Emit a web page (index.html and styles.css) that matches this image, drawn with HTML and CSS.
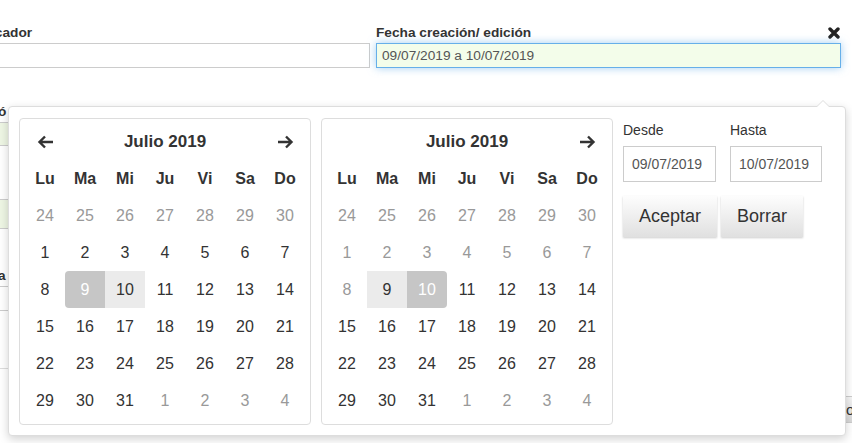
FILE: index.html
```html
<!DOCTYPE html>
<html lang="es">
<head>
  <meta charset="UTF-8">
  <title>Búsqueda</title>
  <meta name="viewport" content="width=device-width, initial-scale=1.0">
  <link rel="stylesheet" href="styles.css">
</head>
<body>

<div class="form">
  <div class="row">
    <div class="field">
      <div class="lbl-row"><label>Identificador</label></div>
      <input class="txt" type="text">
    </div>
    <div class="field">
      <div class="lbl-row">
        <label>Fecha creación/ edición</label>
        <svg class="close" width="12" height="12" viewBox="0 0 12 12"><path d="M2 2 10 10M10 2 2 10" stroke="#222" stroke-width="3.4" stroke-linecap="round"/></svg>
      </div>
      <input class="txt focus" type="text" value="09/07/2019 a 10/07/2019">
    </div>
  </div>

  <div class="row row2">
    <div class="field">
      <div class="lbl-row"><label>Modificó</label></div>
      <input class="txt green" type="text">
    </div>
    <div class="field">
      <div class="lbl-row"><label>Estado</label></div>
      <input class="txt green tall" type="text">
    </div>
  </div>

  <div class="row row3">
    <div class="field"><input class="txt green big" type="text"></div>
    <div class="field"><button class="btn-grey">Buscar</button></div>
  </div>

  <div class="row row4">
    <div class="field">
      <div class="lbl-row"><label>Máquina</label></div>
      <input class="txt" type="text">
    </div>
    <div class="field"><textarea class="area"></textarea></div>
  </div>

  <hr class="sep">
  <div class="foot"><button class="btn-grey wide">Filtros</button></div>
</div>

<div class="picker">
  <div class="cal">
    <table>
      <thead>
        <tr class="head">
          <th><svg width="17" height="14" viewBox="0 0 17 14"><path d="M16 7H2.5M8 1.5 2.5 7 8 12.5" fill="none" stroke="#333" stroke-width="2.4"/></svg></th>
          <th colspan="5" class="month">Julio 2019</th>
          <th><svg width="17" height="14" viewBox="0 0 17 14"><path d="M1 7h13.5M9 1.5 14.5 7 9 12.5" fill="none" stroke="#333" stroke-width="2.4"/></svg></th>
        </tr>
        <tr><th>Lu</th><th>Ma</th><th>Mi</th><th>Ju</th><th>Vi</th><th>Sa</th><th>Do</th></tr>
      </thead>
      <tbody>
        <tr><td class="off">24</td><td class="off">25</td><td class="off">26</td><td class="off">27</td><td class="off">28</td><td class="off">29</td><td class="off">30</td></tr>
        <tr><td>1</td><td>2</td><td>3</td><td>4</td><td>5</td><td>6</td><td>7</td></tr>
        <tr><td>8</td><td class="active start">9</td><td class="range">10</td><td>11</td><td>12</td><td>13</td><td>14</td></tr>
        <tr><td>15</td><td>16</td><td>17</td><td>18</td><td>19</td><td>20</td><td>21</td></tr>
        <tr><td>22</td><td>23</td><td>24</td><td>25</td><td>26</td><td>27</td><td>28</td></tr>
        <tr><td>29</td><td>30</td><td>31</td><td class="off">1</td><td class="off">2</td><td class="off">3</td><td class="off">4</td></tr>
      </tbody>
    </table>
  </div>

  <div class="cal">
    <table>
      <thead>
        <tr class="head">
          <th></th>
          <th colspan="5" class="month">Julio 2019</th>
          <th><svg width="17" height="14" viewBox="0 0 17 14"><path d="M1 7h13.5M9 1.5 14.5 7 9 12.5" fill="none" stroke="#333" stroke-width="2.4"/></svg></th>
        </tr>
        <tr><th>Lu</th><th>Ma</th><th>Mi</th><th>Ju</th><th>Vi</th><th>Sa</th><th>Do</th></tr>
      </thead>
      <tbody>
        <tr><td class="off">24</td><td class="off">25</td><td class="off">26</td><td class="off">27</td><td class="off">28</td><td class="off">29</td><td class="off">30</td></tr>
        <tr><td class="off">1</td><td class="off">2</td><td class="off">3</td><td class="off">4</td><td class="off">5</td><td class="off">6</td><td class="off">7</td></tr>
        <tr><td class="off">8</td><td class="range">9</td><td class="active end">10</td><td>11</td><td>12</td><td>13</td><td>14</td></tr>
        <tr><td>15</td><td>16</td><td>17</td><td>18</td><td>19</td><td>20</td><td>21</td></tr>
        <tr><td>22</td><td>23</td><td>24</td><td>25</td><td>26</td><td>27</td><td>28</td></tr>
        <tr><td>29</td><td>30</td><td>31</td><td class="off">1</td><td class="off">2</td><td class="off">3</td><td class="off">4</td></tr>
      </tbody>
    </table>
  </div>

  <div class="ranges">
    <div class="inputs">
      <div class="rng">
        <label>Desde</label>
        <input class="rin w1" type="text" value="09/07/2019">
      </div>
      <div class="rng">
        <label>Hasta</label>
        <input class="rin w2" type="text" value="10/07/2019">
      </div>
    </div>
    <div class="btns">
      <button class="pbtn ok">Aceptar</button>
      <button class="pbtn clear">Borrar</button>
    </div>
  </div>
</div>

</body>
</html>
```

FILE: styles.css
```css
html, body { margin: 0; padding: 0; overflow: hidden; }
body { font-family: 'Liberation Sans', Arial, sans-serif; color: #333; background: #fff; width: 852px; height: 443px; position: relative; }

/* background form */
.form { margin-left: -50px; padding-top: 25px; width: 891px; }
.row { display: grid; grid-template-columns: 420px 465px; column-gap: 6px; }
.field { display: flex; flex-direction: column; }
.lbl-row { display: flex; justify-content: space-between; align-items: center; height: 16px; margin-bottom: 2px; }
.lbl-row label { font-weight: bold; font-size: 13.7px; line-height: 16px; }
.close { margin-right: 1px; }
.txt { box-sizing: border-box; height: 25px; border: 1px solid #ccc; padding: 0 5px; font: 13.7px 'Liberation Sans', Arial, sans-serif; color: #555; background: #fff; }
.txt.focus { border-color: #66afe9; background: #f3fdea; box-shadow: 0 0 8px rgba(102,175,233,0.6); outline: none; }
.txt.green { background: #eef6e4; height: 24px; }
.txt.tall { height: 25px; }
.txt.big { height: 30px; }

.row2 { margin-top: 36px; }
.row3 { margin-top: 52px; align-items: start; }
.btn-grey { height: 24px; margin-top: 5px; border: 1px solid #aaa; background: linear-gradient(#f6f6f6, #d8d8d8); font: 13px 'Liberation Sans', Arial, sans-serif; color: #333; }
.row4 { margin-top: 39px; align-items: start; }
.area { box-sizing: border-box; height: 45px; margin-top: 6px; border: 1px solid #aaa; resize: none; }
.sep { border: none; border-top: 1px solid #ddd; margin: 49px 0 0; }
.foot { display: flex; justify-content: flex-end; margin-top: 27px; margin-right: -40px; }
.btn-grey.wide { margin-top: 0; height: 27px; width: 66px; font-size: 15px; text-align: left; padding: 0 0 0 5px; border-color: #ccc; }

/* date range picker */
.picker { position: absolute; left: 8px; top: 106px; width: 826px; height: 317px; background: #fff; border: 1px solid #ddd; border-radius: 4px; box-shadow: 0 3px 10px rgba(0,0,0,0.18); display: flex; align-items: flex-start; gap: 10px; padding: 11px 0 0 10px; box-sizing: content-box; }
.picker::before { content: ''; position: absolute; top: -7px; right: 15px; border-left: 7px solid transparent; border-right: 7px solid transparent; border-bottom: 7px solid #ddd; }
.picker::after { content: ''; position: absolute; top: -6px; right: 16px; border-left: 6px solid transparent; border-right: 6px solid transparent; border-bottom: 6px solid #fff; }

.cal { border: 1px solid #ddd; border-radius: 4px; padding: 5px; }
.cal table { border-collapse: collapse; border-spacing: 0; }
.cal th, .cal td { width: 40px; height: 37px; padding: 0; text-align: center; font-size: 16px; }
.cal th { font-weight: bold; color: #333; }
.cal .head th { height: 36px; }
.cal .head svg { display: block; margin: 0 auto; }
.cal .month { font-size: 17px; }
.cal td { color: #333; }
.cal td.off { color: #999; }
.cal td.range { background: #ebebeb; }
.cal td.active { background: #c6c6c6; color: #fff; }
.cal td.start { border-radius: 4px 0 0 4px; }
.cal td.end { border-radius: 0 4px 4px 0; }

.ranges { display: flex; flex-direction: column; }
.inputs { display: flex; gap: 14px; margin-top: 4px; }
.rng { display: flex; flex-direction: column; }
.rng label { font-size: 14px; line-height: 16px; margin-bottom: 8px; color: #333; }
.rin { box-sizing: border-box; height: 36px; border: 1px solid #ccc; padding: 0 8px; font: 14px 'Liberation Sans', Arial, sans-serif; color: #555; }
.rin.w1 { width: 93px; }
.rin.w2 { width: 92px; }
.btns { display: flex; gap: 4px; margin-top: 14px; }
.pbtn { height: 41px; border: none; background: linear-gradient(#fdfdfd, #e0e0e0); box-shadow: 0 1px 2px rgba(0,0,0,0.2); font: 18px 'Liberation Sans', Arial, sans-serif; color: #333; padding: 0; }
.pbtn.ok { width: 94px; }
.pbtn.clear { width: 82px; }
```
